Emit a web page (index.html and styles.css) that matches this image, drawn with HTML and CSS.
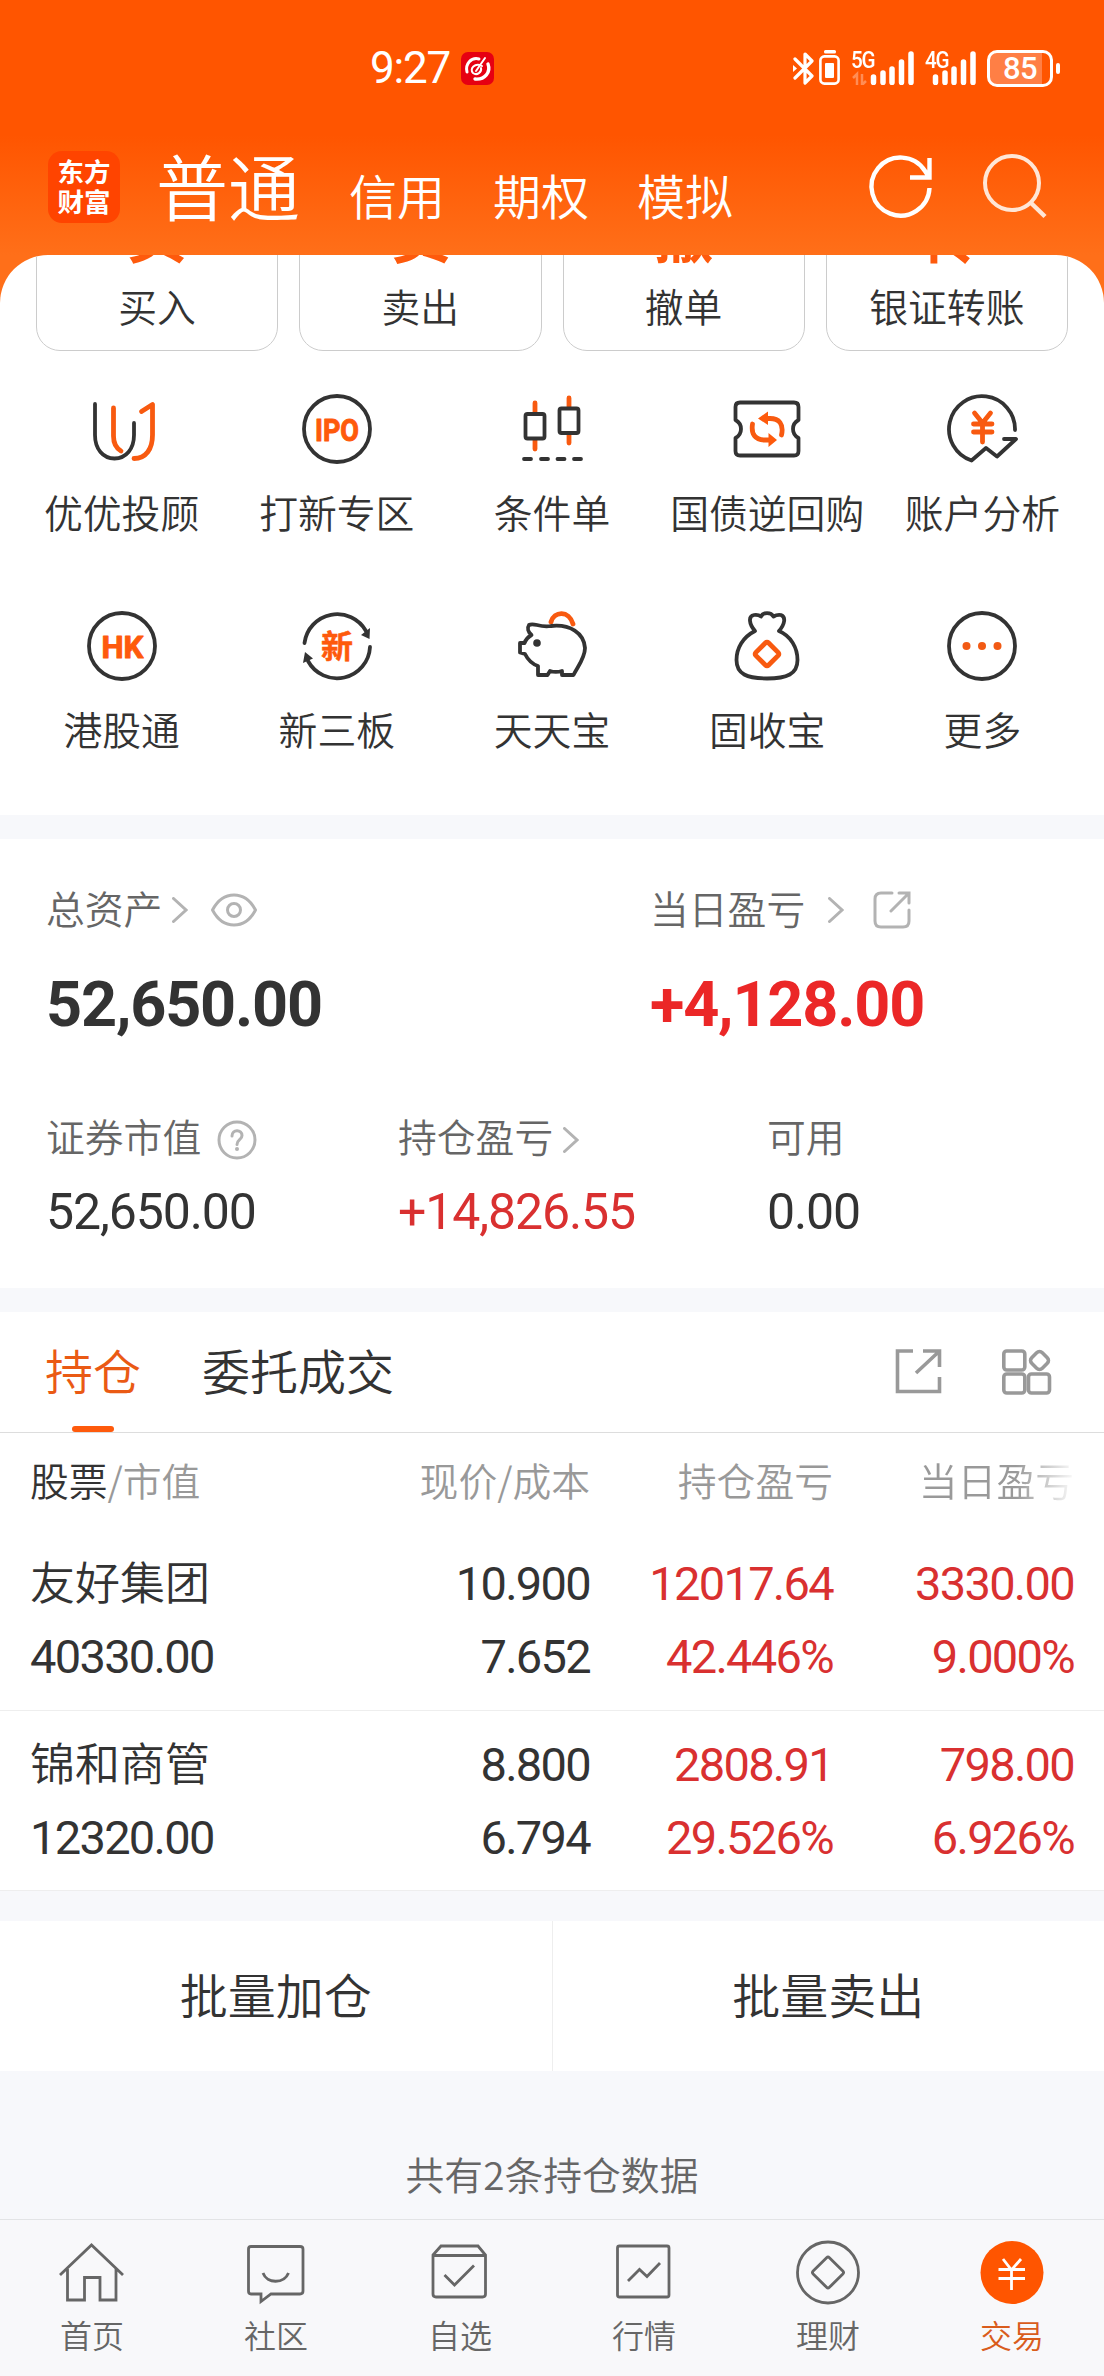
FILE: index.html
```html
<!DOCTYPE html>
<html lang="zh-CN">
<head>
    <meta charset="UTF-8">
    <meta name="viewport" content="width=device-width, initial-scale=1.0">
    <title>交易</title>
    <link rel="stylesheet" href="styles.css">
</head>
<body>
    <header class="header">
        <div class="status">
            <div class="status-left">
                <span class="time">9:27</span>
                <svg class="app-badge" viewBox="0 0 33 33">
                    <rect width="33" height="33" rx="7" fill="#e60012"/>
                    <g fill="none" stroke="#fff" stroke-linecap="round">
                        <path d="M6 20C4 12 10 5 18 7" stroke-width="3"/>
                        <path d="M27 12C30 20 24 28 14 27" stroke-width="3.4"/>
                        <path d="M24 6L15 19M21 14C14 10 8 17 12 21C16 24 21 20 20 16" stroke-width="2"/>
                    </g>
                </svg>
            </div>
            <div class="status-right">
                <svg class="bluetooth" viewBox="0 0 22 35">
                    <path d="M2 8L19 25L12 32V3L19 10L2 27" fill="none" stroke="#fff" stroke-width="3.2" stroke-linejoin="round" stroke-linecap="round"/>
                    <path d="M0 14l4 3.5l-4 3.5z" fill="#fff"/>
                </svg>
                <svg class="earbud" viewBox="0 0 22 36">
                    <rect x="5" y="0" width="12" height="3.4" rx="1.5" fill="#fff"/>
                    <rect x="1.4" y="6.4" width="18.2" height="27.2" rx="4" fill="none" stroke="#fff" stroke-width="2.6"/>
                    <rect x="6" y="13" width="9" height="15" rx="1" fill="#fff"/>
                </svg>
                <div class="signal signal-5g">
                    <span>5G</span>
                    <svg viewBox="0 0 62 34">
                        <path d="M1 27l4-4v11M10 23v11l4-4" fill="none" stroke="#ff8d55" stroke-width="2.5"/>
                        <path d="M21.500 26v5.500M31 22v9.500M40 18v13.500M49.500 11v20.500M59 3v28.500" stroke="#fff" stroke-width="5.500" stroke-linecap="round"/>
                    </svg>
                </div>
                <div class="signal signal-4g">
                    <span>4G</span>
                    <svg viewBox="0 0 50 34">
                        <path d="M9.500 26v5.500M19 22v9.500M28 18v13.500M37.500 11v20.500M47 3v28.500" stroke="#fff" stroke-width="5.500" stroke-linecap="round"/>
                    </svg>
                </div>
                <div class="battery"><b>85</b></div>
                <i class="battery-tip"></i>
            </div>
        </div>
        <nav class="top-nav">
            <div class="logo"><span>东方</span><span>财富</span></div>
            <div class="top-tabs">
                <span class="current">普通</span>
                <span>信用</span>
                <span>期权</span>
                <span>模拟</span>
            </div>
            <svg class="refresh" viewBox="0 0 72 72">
                <path d="M64.500 37A29 29 0 1 1 60 20L64 26M64.500 7V26.500H45" fill="none" stroke="#fff" stroke-width="4.400"/>
            </svg>
            <svg class="search" viewBox="0 0 72 72">
                <circle cx="35" cy="32" r="27" fill="none" stroke="#ffe6d6" stroke-width="4"/>
                <path d="M53 51L68 65.500" stroke="#ffe6d6" stroke-width="4.500"/>
            </svg>
        </nav>
    </header>

    <section class="panel">
        <div class="cards">
            <div class="card"><b>买</b><span>买入</span></div>
            <div class="card"><b>卖</b><span>卖出</span></div>
            <div class="card"><b>撤</b><span>撤单</span></div>
            <div class="card"><b>转</b><span>银证转账</span></div>
        </div>
        <div class="menu">
            <div class="item">
                <svg viewBox="0 0 80 80">
                    <path class="dark" d="M13 15V46C13 60 21 69.500 32.500 69.500S52 60 52 46V34"/>
                    <path class="hot" d="M31.500 19V47C31.500 54 34 59 39 62M59.500 22.500L70.500 15.500V46C70.500 60 64 69.500 52 69.500"/>
                </svg>
                <span>优优投顾</span>
            </div>
            <div class="item">
                <svg viewBox="0 0 80 80">
                    <circle class="dark" cx="40" cy="40" r="33"/>
                    <text x="18" y="51.500" textLength="44" lengthAdjust="spacingAndGlyphs">IPO</text>
                </svg>
                <span>打新专区</span>
            </div>
            <div class="item">
                <svg viewBox="0 0 80 80">
                    <path class="hot" d="M23 14V23M23 51V60M57 9V18M57 46V54"/>
                    <rect class="dark" x="13.500" y="25" width="19" height="24.500" rx="2"/>
                    <rect class="dark" x="47.500" y="19.500" width="19" height="24.500" rx="2"/>
                    <path class="dark" d="M12 70H19M29 70H36M45.500 70H52.500M62 70H69"/>
                </svg>
                <span>条件单</span>
            </div>
            <div class="item">
                <svg viewBox="0 0 80 80">
                    <path class="dark" d="M14 13.500H67Q71.500 13.500 71.500 18V31Q66 34 66 40T71.500 49V62Q71.500 66.500 67 66.500H13Q8.500 66.500 8.500 62V49Q14 46 14 40T8.500 31V18Q8.500 13.500 13 13.500Z"/>
                    <path class="hot" d="M25.500 35C24 45 28 51 38 51H44M54.500 46C57 35 52 29.500 43 29.500H38"/>
                    <path fill="#fe5a0c" d="M41.500 44L50 51L41.500 58ZM41 22.500L31 29.500L41 36Z"/>
                </svg>
                <span>国债逆回购</span>
            </div>
            <div class="item">
                <svg viewBox="0 0 80 80">
                    <path class="dark" d="M73 41A33 33 0 1 0 29.500 71.500L44 59L55 67.500L74 50H62"/>
                    <path class="hot" d="M32.500 24L40.500 34L48.500 24M40.500 34V53M31.500 35H50M31.500 43H50"/>
                </svg>
                <span>账户分析</span>
            </div>
            <div class="item">
                <svg viewBox="0 0 80 80">
                    <circle class="dark" cx="40" cy="40" r="33"/>
                    <text x="19.500" y="51.500" textLength="42" lengthAdjust="spacingAndGlyphs">HK</text>
                </svg>
                <span>港股通</span>
            </div>
            <div class="item">
                <svg viewBox="0 0 80 80">
                    <path class="dark" d="M7.500 37A33 33 0 0 1 69 25M73 41A33 33 0 0 1 11 55"/>
                    <path fill="#333" d="M64 29L73 22L72.500 33ZM6 57L8 46L16 52.500Z"/>
                    <text class="cjk" x="24" y="52">新</text>
                </svg>
                <span>新三板</span>
            </div>
            <div class="item">
                <svg viewBox="0 0 80 80">
                    <path class="hot" d="M39 16C42 5 57 4 61 18"/>
                    <path class="dark" d="M17 19C22 16 27 22 39 20C58 18 72 27 73 42C73 52 66 60 61.500 69H50V65C45 66.500 41 66 38 65L35.500 69H26V60C20 58 16 54 13 48L8 46.500V37H12.500C14 33 16 31 19.500 29C16 26 15 22 17 19Z"/>
                    <circle cx="25" cy="37" r="3.800" fill="#333"/>
                </svg>
                <span>天天宝</span>
            </div>
            <div class="item">
                <svg viewBox="0 0 80 80">
                    <path class="dark" d="M28 25C22 18 21 10 27 9C30 8.500 32 9 34 10.500C36 6 44 6 46.500 10.500C49 9 51 8.500 54 9C59 11 58 18 52 25C64 30 70.500 42 70.500 54C70.500 68 60 72.500 40 72.500S9.500 68 9.500 54C9.500 42 16 31 28 25Z"/>
                    <rect class="hot" x="31" y="39" width="18" height="18" rx="2" transform="rotate(45 40 48)"/>
                </svg>
                <span>固收宝</span>
            </div>
            <div class="item">
                <svg viewBox="0 0 80 80">
                    <circle class="dark" cx="40" cy="40" r="33"/>
                    <g fill="#f25a14"><circle cx="24.500" cy="40" r="4"/><circle cx="40" cy="40" r="4"/><circle cx="55.500" cy="40" r="4"/></g>
                </svg>
                <span>更多</span>
            </div>
        </div>
    </section>

    <section class="assets">
        <div class="total">
            <div>
                <div class="label">总资产
                    <svg class="arrow near" viewBox="0 0 16 26"><path d="M1.500 1.500L14 13L1.500 24.500"/></svg>
                    <svg class="eye" viewBox="0 0 46 34"><path d="M1.500 17C12 -3 34 -3 44.500 17C34 37 12 37 1.500 17Z"/><circle cx="23" cy="17" r="6.500"/></svg>
                </div>
                <div class="big">52,650.00</div>
            </div>
            <div>
                <div class="label">当日盈亏
                    <svg class="arrow far" viewBox="0 0 16 26"><path d="M1.500 1.500L14 13L1.500 24.500"/></svg>
                    <svg class="share" viewBox="0 0 38 38"><path d="M19 2H8Q2 2 2 8V30Q2 36 8 36H30Q36 36 36 30V19M26 2H36V12M36 2L18 20"/></svg>
                </div>
                <div class="big up">+4,128.00</div>
            </div>
        </div>
        <div class="detail">
            <div>
                <div class="label">证券市值
                    <svg class="help" viewBox="0 0 40 40"><circle cx="20" cy="20" r="18"/><path d="M15 16C15 9 25 9 25 15.500C25 20 20 19.500 20 24.500"/><circle class="dot" cx="20" cy="29" r="2"/></svg>
                </div>
                <div class="num">52,650.00</div>
            </div>
            <div>
                <div class="label">持仓盈亏
                    <svg class="arrow near" viewBox="0 0 16 26"><path d="M1.500 1.500L14 13L1.500 24.500"/></svg>
                </div>
                <div class="num red">+14,826.55</div>
            </div>
            <div>
                <div class="label">可用</div>
                <div class="num">0.00</div>
            </div>
        </div>
    </section>

    <section class="holdings">
        <div class="tabs">
            <span class="tab active">持仓</span>
            <span class="tab">委托成交</span>
            <svg class="tool" viewBox="0 0 50 50"><path d="M19 3H3.500V43.500H45.500V29M29 3H45.500V19M45 3.500L22 25"/></svg>
            <svg class="tool" viewBox="0 0 50 50"><rect x="1.800" y="3" width="21" height="19" rx="3"/><rect x="1.800" y="26" width="21" height="19" rx="3"/><rect x="26.500" y="26" width="21" height="19" rx="3"/><rect x="30" y="5" width="15" height="15" rx="4" transform="rotate(45 37.500 12.500)"/></svg>
        </div>
        <div class="row head">
            <div><em>股票</em>/市值</div>
            <div>现价/成本</div>
            <div>持仓盈亏</div>
            <div class="fade">当日盈亏</div>
        </div>
        <div class="row">
            <div><span class="name">友好集团</span><span>40330.00</span></div>
            <div><span>10.900</span><span>7.652</span></div>
            <div class="red"><span>12017.64</span><span>42.446%</span></div>
            <div class="red"><span>3330.00</span><span>9.000%</span></div>
        </div>
        <div class="row">
            <div><span class="name">锦和商管</span><span>12320.00</span></div>
            <div><span>8.800</span><span>6.794</span></div>
            <div class="red"><span>2808.91</span><span>29.526%</span></div>
            <div class="red"><span>798.00</span><span>6.926%</span></div>
        </div>
    </section>

    <div class="batch">
        <div>批量加仓</div>
        <div>批量卖出</div>
    </div>
    <p class="summary">共有2条持仓数据</p>

    <footer class="tabbar">
        <div>
            <svg viewBox="0 0 72 72"><path d="M4 39L35.500 9L67 39M11.500 33V64H28.500V41.500H44V64H60V33"/></svg>
            <span>首页</span>
        </div>
        <div>
            <svg viewBox="0 0 72 72"><path d="M11 10.500H60Q63 10.500 63 13V55Q63 58 60 58H31L21 65.500V58H11Q8.500 58 8.500 55V13Q8.500 10.500 11 10.500ZM23 37C27 48 44 48 48.500 37"/></svg>
            <span>社区</span>
        </div>
        <div>
            <svg viewBox="0 0 72 72"><path d="M9 19L17 10H54L61.500 19V58Q61.500 61 58.500 61H12Q9 61 9 58ZM9 19.500H61.500M20.500 39L30.500 49L50 29.500"/></svg>
            <span>自选</span>
        </div>
        <div>
            <svg viewBox="0 0 72 72"><rect x="9.500" y="10" width="51.500" height="51" rx="2"/><path d="M20 45L31.500 33.500L39 40.500L52 27"/></svg>
            <span>行情</span>
        </div>
        <div>
            <svg viewBox="0 0 72 72"><circle cx="36" cy="36.500" r="30.500"/><rect x="24.500" y="25" width="23" height="23" rx="2" transform="rotate(45 36 36.500)"/></svg>
            <span>理财</span>
        </div>
        <div class="on">
            <svg viewBox="0 0 72 72"><circle class="fill" cx="36" cy="36.500" r="31.500"/><path class="yen" d="M27 23L35.500 34L45 23M35.500 34V54M22.500 33.500H49M22.500 42.500H49"/></svg>
            <span>交易</span>
        </div>
    </footer>
</body>
</html>
```
FILE: styles.css
```css
*{
    box-sizing: border-box;
    padding: 0;
    margin: 0;
}

body{
    font-family: 'Noto Sans CJK SC', sans-serif;
    font-size: 38.8px;
    font-weight: 350;
    line-height: 1;
    color: #333;
    background-color: #f7f8fb;
}

svg{
    display: block;
    flex: none;
}

/* header */
.header{
    height: 315px;
    padding: 49px 44px 0 48px;
    color: #fff;
    background: linear-gradient(#ff5500 0, #ff5500 135px, #ff6f19 255px);
}

.status{
    display: flex;
    justify-content: space-between;
    height: 38px;
}

.status-left{
    display: flex;
    align-items: center;
    margin-left: 322px;
}

.time{
    font-family: Roboto, sans-serif;
    font-size: 44px;
    font-weight: 400;
    letter-spacing: -1.2px;
    width: 91px;
}

.app-badge{
    width: 33px;
    height: 33px;
}

.status-right{
    display: flex;
    align-items: center;
}

.bluetooth{
    width: 22px;
    height: 35px;
}

.earbud{
    width: 22px;
    height: 36px;
    margin: 0 11px 0 4px;
}

.signal{
    position: relative;
    height: 34px;
    margin-right: 11px;
}

.signal svg{
    height: 34px;
}

.signal-5g svg{
    width: 62px;
}

.signal-4g svg{
    width: 50px;
}

.signal span{
    position: absolute;
    top: 0;
    left: -1px;
    font: 500 24px/18px Roboto, sans-serif;
    letter-spacing: -1.5px;
    transform: scaleX(.86);
    transform-origin: left;
}

.signal-4g{
    margin-left: 1px;
}

.battery{
    width: 66px;
    height: 37px;
    border: 3px solid #fff;
    border-radius: 10px;
    background: linear-gradient(90deg, #ff7f45 86%, transparent 86%);
    font-size: 0;
    text-align: center;
}

.battery b{
    display: block;
    font: 500 31px/32px Roboto, sans-serif;
    letter-spacing: -.5px;
}

.battery-tip{
    width: 4px;
    height: 11px;
    margin-left: 3px;
    border-radius: 2px;
    background: #fff;
}

.top-nav{
    display: flex;
    align-items: center;
    height: 72px;
    margin-top: 64px;
}

.logo{
    display: flex;
    flex-direction: column;
    justify-content: center;
    align-items: center;
    gap: 3px;
    width: 72px;
    height: 72px;
    padding-bottom: 2px;
    border-radius: 14px;
    background: #ff4400;
    font-size: 26.5px;
    font-weight: 700;
}

.top-tabs{
    display: flex;
    align-items: baseline;
    gap: 48px;
    flex: 1;
    margin-left: 36px;
    padding-bottom: 7px;
    font-size: 48px;
}

.top-tabs .current{
    font-size: 72px;
    margin-right: 1px;
}

.refresh,.search{
    width: 72px;
    height: 72px;
}

.search{
    margin-left: 40px;
    margin-right: 11px;
}

/* quick actions */
.panel{
    height: 560px;
    margin-top: -60px;
    overflow: hidden;
    border-radius: 48px 48px 0 0;
    background: #fff;
}

.cards{
    display: flex;
    gap: 21px;
    padding: 0 36px;
}

/* scrolled halfway under the header */
.card{
    flex: 1;
    display: flex;
    flex-direction: column;
    align-items: center;
    height: 164px;
    margin-top: -68px;
    border: 1.5px solid #ccc;
    border-radius: 24px;
}

.card b{
    margin-top: 14px;
    font-size: 60px;
    font-weight: 700;
    color: #fe5a0c;
}

.card span{
    margin-top: 24px;
}

.menu{
    display: grid;
    grid-template-columns: repeat(5, 1fr);
    padding: 38px 14px 0;
}

.item{
    display: flex;
    flex-direction: column;
    align-items: center;
    height: 217px;
    white-space: nowrap;
}

.item svg{
    width: 80px;
    height: 80px;
}

.item span{
    margin-top: 23px;
}

.item .dark,.item .hot{
    fill: none;
    stroke: #333;
    stroke-width: 3.8;
    stroke-linecap: round;
    stroke-linejoin: round;
}

.item .hot{
    stroke: #f85a10;
    stroke-width: 4.8;
}

.item text{
    font: 700 31px Roboto, sans-serif;
    fill: #fe5a0c;
    stroke: #fe5a0c;
    stroke-width: 1;
    stroke-linejoin: round;
}

.item .cjk{
    font: 700 32px 'Noto Sans CJK SC', sans-serif;
    stroke-width: .5;
}

/* assets */
.assets{
    height: 449px;
    margin-top: 24px;
    padding: 48px 46px 0;
    background: #fff;
}

.total,.detail{
    display: grid;
    grid-template-columns: 604px 1fr;
}

.detail{
    grid-template-columns: 352px 369px 1fr;
    margin-top: 79px;
}

.label{
    display: flex;
    align-items: center;
    height: 46px;
    padding-bottom: 5px;
    color: #666;
}

.label svg{
    margin-top: 5px;
    fill: none;
    stroke: #b3b3b3;
    stroke-width: 3;
    stroke-linecap: round;
}

.label .dot{
    fill: #b3b3b3;
    stroke: none;
}

.arrow{
    width: 16px;
    height: 26px;
    margin-left: 10px;
}

.far{
    margin-left: 23px;
}

.eye{
    width: 46px;
    height: 34px;
    margin-left: 23px;
}

.share{
    width: 38px;
    height: 38px;
    margin-left: 29px;
}

.help{
    width: 40px;
    height: 40px;
    margin-left: 16px;
}

.detail svg{
    margin-top: 8px;
}

.big{
    margin-top: 40px;
    font: 700 63px/63px Roboto, sans-serif;
    letter-spacing: -1.2px;
}

.up{
    color: #eb2727;
}

.num{
    margin-top: 26px;
    font: 400 50px/50px Roboto, sans-serif;
    letter-spacing: -1.1px;
}

.red{
    color: #d93030;
}

/* holdings */
.holdings{
    margin-top: 24px;
    background: #fff;
}

.tabs{
    display: flex;
    align-items: center;
    height: 121px;
    padding: 0 52px 0 45px;
    border-bottom: 1.5px solid #ddd;
    font-size: 48px;
}

.tab{
    position: relative;
    height: 119px;
    margin-right: 61px;
    line-height: 112px;
}

.active{
    color: #ea5a14;
}

.active::after{
    content: '';
    position: absolute;
    bottom: 0;
    left: 27px;
    width: 42px;
    height: 6px;
    border-radius: 3px;
    background: #fe5a0c;
}

.tool{
    width: 50px;
    height: 50px;
    margin-top: 2px;
    fill: none;
    stroke: #999;
    stroke-width: 3.6;
}

.tab + .tool{
    margin-left: auto;
    margin-right: 58px;
}

.row{
    display: grid;
    grid-template-columns: 1fr 250px 243px 241px;
    height: 180.5px;
    padding: 17px 30px 0;
    border-bottom: 1.5px solid #eee;
    text-align: right;
    font: 400 47px/73px Roboto, 'Noto Sans CJK SC', sans-serif;
    letter-spacing: -1.7px;
}

.row div:first-child{
    text-align: left;
}

.row span{
    display: block;
    height: 73px;
}

.row .name{
    font: 350 45px/68px 'Noto Sans CJK SC', sans-serif;
    letter-spacing: 0;
}

.head{
    height: 97px;
    padding-top: 0;
    border: 0;
    font: 350 38.8px/92px 'Noto Sans CJK SC', sans-serif;
    letter-spacing: 0;
    color: #999;
}

.head em{
    font-style: normal;
    color: #333;
}

.fade{
    color: transparent;
    background: linear-gradient(90deg, #999 76%, #fafafa 100%);
    -webkit-background-clip: text;
    background-clip: text;
}

/* bottom */
.batch{
    display: flex;
    height: 150px;
    margin-top: 30px;
    background: #fff;
    font-size: 48px;
    line-height: 145px;
    text-align: center;
}

.batch div{
    flex: 1;
}

.batch div + div{
    border-left: 1.5px solid #eee;
}

.summary{
    height: 148px;
    padding-top: 83px;
    text-align: center;
    color: #666;
}

.tabbar{
    display: flex;
    height: 157px;
    padding-top: 16px;
    border-top: 1.5px solid #e3e4e6;
    background: #f8f8fa;
    font-size: 32px;
    color: #666;
}

.tabbar div{
    flex: 1;
    display: flex;
    flex-direction: column;
    align-items: center;
    gap: 10px;
}

.tabbar svg{
    width: 72px;
    height: 72px;
    fill: none;
    stroke: #666;
    stroke-width: 2.8;
}

.tabbar .on{
    color: #d95c1c;
}

.tabbar .fill{
    fill: #ff5500;
    stroke: none;
}

.tabbar .yen{
    stroke: #fff;
}
```
